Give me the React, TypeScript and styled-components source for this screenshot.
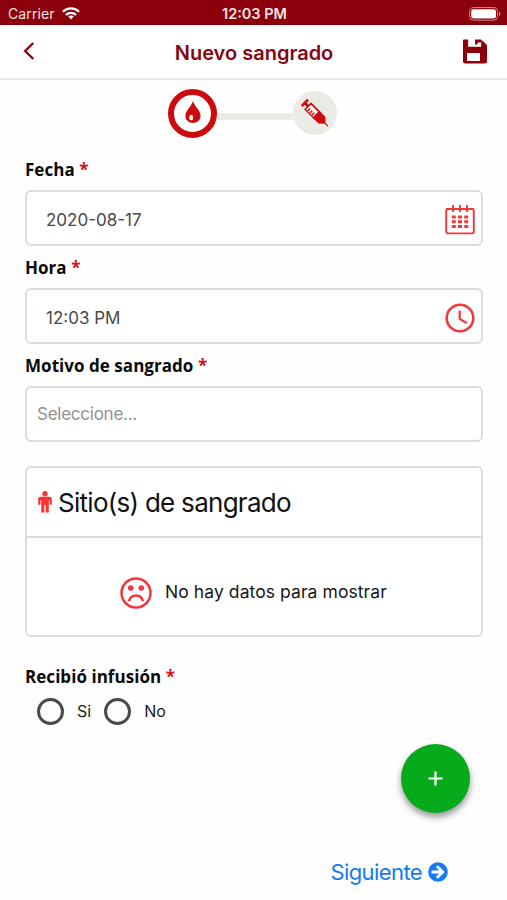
import React from 'react';
import styled, { createGlobalStyle } from 'styled-components';

const GlobalStyle = createGlobalStyle`
  * { box-sizing: border-box; }
  body { margin: 0; background: #fff; font-family: Inter, "Liberation Sans", sans-serif; color: #111; }
`;

const Screen = styled.div`
  width: 507px;
  height: 900px;
  display: flex;
  flex-direction: column;
  background: #fefefe;
  overflow: hidden;
`;

const StatusBar = styled.div`
  height: 25px;
  flex: none;
  display: grid;
  grid-template-columns: 1fr auto 1fr;
  align-items: center;
  padding: 2px 6px 0 8px;
  background: #8b000b;
  color: #f7e4e5;
`;

const Carrier = styled.div`
  display: flex;
  align-items: center;
  gap: 7px;
  font-size: 14px;
  line-height: 20px;
  letter-spacing: 0.1px;
`;

const Clock = styled.div`
  font-size: 14.5px;
  line-height: 20px;
  font-weight: 600;
`;

const Battery = styled.svg`
  justify-self: end;
`;

const Header = styled.header`
  height: 55px;
  flex: none;
  display: grid;
  grid-template-columns: 60px 1fr 60px;
  align-items: center;
  border-bottom: 2px solid #e6e6e6;
  background: #fff;
`;

const Title = styled.h1`
  margin: 0;
  font-size: 20px;
  font-weight: 600;
  line-height: 28px;
  text-align: center;
  color: #850611;
  padding: 2px 0 0 1px;
`;

const IconButton = styled.button<{ $side: 'left' | 'right' }>`
  display: flex;
  border: 0;
  background: none;
  padding: ${p => (p.$side === 'left' ? '0 0 2px 23px' : '0 0 1px 15px')};
`;

const Stepper = styled.div`
  display: flex;
  align-items: center;
  height: 50px;
  flex: none;
  margin: 8px 0 0 168px;
`;

const Step = styled.div<{ $active?: boolean }>`
  width: ${p => (p.$active ? 49 : 44)}px;
  height: ${p => (p.$active ? 49 : 44)}px;
  border-radius: 50%;
  border: ${p => (p.$active ? '6px solid #cd0a0d' : '0')};
  background: ${p => (p.$active ? '#fff' : '#ebebe6')};
  display: flex;
  align-items: center;
  justify-content: center;
  padding-bottom: ${p => (p.$active ? 3 : 0)}px;
`;

const StepLine = styled.div`
  width: 76px;
  height: 7px;
  margin-top: 7px;
  background: #ebebe6;
`;

const Form = styled.main`
  display: flex;
  flex-direction: column;
  padding: 21px 24px 0 25px;
`;

const Label = styled.div`
  height: 22px;
  font: 700 17px/22px "Open Sans", "Noto Sans", sans-serif;
  letter-spacing: 0.04px;
  color: #0a0a0a;
`;

const Required = styled.span`
  color: #d2121a;
`;

const Field = styled.div<{ $placeholder?: boolean }>`
  display: flex;
  align-items: center;
  justify-content: space-between;
  height: 56px;
  margin: 9px 0 11px;
  padding: ${p => (p.$placeholder ? '0 6px 1px 10px' : '3px 6px 0 19px')};
  border: 2px solid #dcdcdc;
  border-radius: 6px;
  background: #fff;
  font-size: 17px;
  letter-spacing: ${p => (p.$placeholder ? -0.25 : 0)}px;
  color: ${p => (p.$placeholder ? '#929292' : '#484848')};
`;

const Card = styled.section`
  height: 171px;
  margin: 13px 0 29px;
  border: 2px solid #dcdcdc;
  border-radius: 6px;
  background: #fff;
`;

const CardHeader = styled.div`
  display: flex;
  align-items: center;
  gap: 6px;
  height: 70px;
  padding: 0 0 0 11px;
  border-bottom: 2px solid #dcdcdc;
`;

const CardTitle = styled.h2`
  margin: 0;
  padding-top: 2px;
  font-size: 26px;
  font-weight: 400;
  line-height: 32px;
  letter-spacing: -0.72px;
  color: #111;
`;

const Empty = styled.div`
  display: flex;
  align-items: center;
  height: 97px;
  padding: 12px 0 0 93px;
`;

const EmptyText = styled.span`
  margin: 0 0 2px 13px;
  font-size: 17.5px;
  letter-spacing: 0.08px;
  color: #161616;
`;

const Radios = styled.div`
  display: flex;
  gap: 13px;
  padding: 10px 0 0 12px;
`;

const Radio = styled.div`
  display: flex;
  align-items: center;
  gap: 13px;
  font-size: 16px;
  line-height: 27px;
  color: #222;
`;

const RadioCircle = styled.span`
  width: 27px;
  height: 27px;
  border: 3px solid #4a4a4a;
  border-radius: 50%;
`;

const AddButton = styled.button`
  align-self: flex-end;
  display: flex;
  align-items: center;
  justify-content: center;
  width: 69px;
  height: 69px;
  flex: none;
  margin: 19px 37px 0 0;
  padding: 0 0 1px;
  border: 0;
  border-radius: 50%;
  background: #07aa1b;
  box-shadow: 0 4px 7px rgba(0, 0, 0, 0.42);
`;

const Next = styled.button`
  align-self: flex-end;
  display: flex;
  align-items: center;
  gap: 6px;
  margin: 43px 59px 0 0;
  padding: 0;
  border: 0;
  background: none;
  font: 400 22px/32px Inter, sans-serif;
  letter-spacing: -0.6px;
  color: #147bf0;
`;

const Glyph = styled.svg`
  display: block;
  flex: none;
`;

const red = '#f2383b';

const Wifi = () => (
  <Glyph width="18" height="13" viewBox="0 0 18 13" fill="none" stroke="#fff" strokeWidth="2.3">
    <path d="M1 4.8C5.6.3 12.4.3 17 4.8" />
    <path d="M4 8c2.8-2.8 7.2-2.8 10 0" />
    <path d="M6.2 9.6c1.6-1.5 4-1.5 5.6 0L9 12.5z" fill="#fff" stroke="none" />
  </Glyph>
);

const Calendar = () => (
  <Glyph width="30" height="31" viewBox="0 0 30 31" fill="none" stroke={red} strokeWidth="1.9">
    <rect x="1.2" y="5" width="27.6" height="24.4" rx="2" />
    <path d="M1 5h28" />
    <path d="M8 1v7M15 1v7M22 1v7" />
    <path d="M6.8 13h4M13 13h4M19.2 13h4M6.8 17.7h4M13 17.7h4M19.2 17.7h4M6.8 22.4h4M13 22.4h4M19.2 22.4h4" strokeWidth="3" />
  </Glyph>
);

const ClockIcon = () => (
  <Glyph width="30" height="30" viewBox="0 0 30 30" fill="none" stroke={red}>
    <circle cx="15" cy="15" r="13.3" strokeWidth="2.6" />
    <path d="M14.7 7.4v8.4l7 4.3" strokeWidth="2.2" />
  </Glyph>
);

const Syringe = () => (
  <Glyph width="30" height="30" viewBox="-1 -1 30 30">
    <g transform="rotate(45 15 15)">
      <path d="M-2 10.6h2.6v3h2.6v-3.3h14.5v9.8H3.2v-3.7h-2.6v3h-2.6z" fill="#cd0a0d" />
      <path d="M4.8 12h10.4v6.9H4.8z" fill="#fff8f5" />
      <path d="M7 18.9v-3.6M10 18.9v-3.6M13 18.9v-3.6" stroke="#cd0a0d" strokeWidth="1.4" />
      <path d="M15 10.3h8.5l4.3 4v1.8l-4.3 4H15zM27 14.5h5v1.3H27z" fill="#cd0a0d" />
    </g>
  </Glyph>
);

export default function App() {
  return (
    <>
      <GlobalStyle />
      <Screen>
        <StatusBar>
          <Carrier>Carrier <Wifi /></Carrier>
          <Clock>12:03 PM</Clock>
          <Battery width="32" height="14" viewBox="0 0 32 14">
            <rect x=".6" y=".6" width="28" height="12.6" rx="4" fill="none" stroke="#cf8d91" strokeWidth="1" />
            <rect x="2.2" y="2.2" width="24.8" height="9.4" rx="2.4" fill="#fff" />
            <path d="M30 4.8c2 .8 2 3.4 0 4.2z" fill="#cf8d91" />
          </Battery>
        </StatusBar>
        <Header>
          <IconButton $side="left" aria-label="Volver">
            <Glyph width="12" height="18" viewBox="0 0 12 18" fill="none" stroke="#850611" strokeWidth="2.4">
              <path d="M10.3 1 2.2 9l8.1 8" />
            </Glyph>
          </IconButton>
          <Title>Nuevo sangrado</Title>
          <IconButton $side="right" aria-label="Guardar">
            <Glyph width="26" height="25" viewBox="-.5 0 26 25">
              <path fill="#8b000b" fillRule="evenodd" d="M1.5.5h4.200v7.300h13V.5L24.500 6v16.500a2 2 0 0 1-2 2h-20a2 2 0 0 1-2-2v-21a1 1 0 0 1 1-1zM4.500 14v8h13v-8zM12.500.5h2.700v5h-2.700zM15.200.5h3.700v3h-3.700z" />
            </Glyph>
          </IconButton>
        </Header>
        <Stepper>
          <Step $active>
            <Glyph width="16" height="24" viewBox="0 0 16 24">
              <path d="M8 .8C7 6 .4 10.5.4 16a7.6 7 0 0 0 15.2 0C15.6 10.5 9 6 8 .8z" fill="#cd0a0d" />
              <ellipse cx="6.2" cy="17.5" rx="2" ry="2.7" fill="#fff" />
            </Glyph>
          </Step>
          <StepLine />
          <Step><Syringe /></Step>
        </Stepper>
        <Form>
          <Label>Fecha <Required>*</Required></Label>
          <Field>2020-08-17<Calendar /></Field>
          <Label>Hora <Required>*</Required></Label>
          <Field>12:03 PM<ClockIcon /></Field>
          <Label>Motivo de sangrado <Required>*</Required></Label>
          <Field $placeholder>Seleccione...</Field>
          <Card>
            <CardHeader>
              <Glyph width="14" height="22" viewBox="0 0 14 22" fill="#fb3336">
                <circle cx="7" cy="2.8" r="2.7" />
                <path d="M2.5 5.8h9a2.3 2.3 0 0 1 2.3 2.3v5.6h-2.2V9.2h-.8V21.5H7.6V14H6.4v7.5H3.2V9.2h-.8v4.5H.2V8.1a2.3 2.3 0 0 1 2.3-2.3z" />
              </Glyph>
              <CardTitle>Sitio(s) de sangrado</CardTitle>
            </CardHeader>
            <Empty>
              <Glyph width="32" height="32" viewBox="0 0 32 32" fill="none" stroke={red} strokeWidth="2.5">
                <circle cx="16" cy="16" r="14.5" />
                <path d="M9 24.2c1.8-7.6 12.2-7.6 14 0" />
                <circle cx="10.7" cy="11" r="2.8" fill={red} stroke="none" />
                <circle cx="21.3" cy="11" r="2.8" fill={red} stroke="none" />
              </Glyph>
              <EmptyText>No hay datos para mostrar</EmptyText>
            </Empty>
          </Card>
          <Label>Recibió infusión <Required>*</Required></Label>
          <Radios>
            <Radio><RadioCircle />Si</Radio>
            <Radio><RadioCircle />No</Radio>
          </Radios>
        </Form>
        <AddButton aria-label="Agregar">
          <Glyph width="15" height="15" viewBox="0 0 15 15" stroke="#fff" strokeWidth="2.2">
            <path d="M7.5.5v14M.5 7.5h14" />
          </Glyph>
        </AddButton>
        <Next>
          Siguiente
          <Glyph width="20" height="20" viewBox="0 0 20 20">
            <circle cx="10" cy="10" r="9.8" fill="#147bf0" />
            <path d="M3.5 10h11M8.9 4.2 14.7 10l-5.8 5.8" fill="none" stroke="#fff" strokeWidth="2.9" />
          </Glyph>
        </Next>
      </Screen>
    </>
  );
}
